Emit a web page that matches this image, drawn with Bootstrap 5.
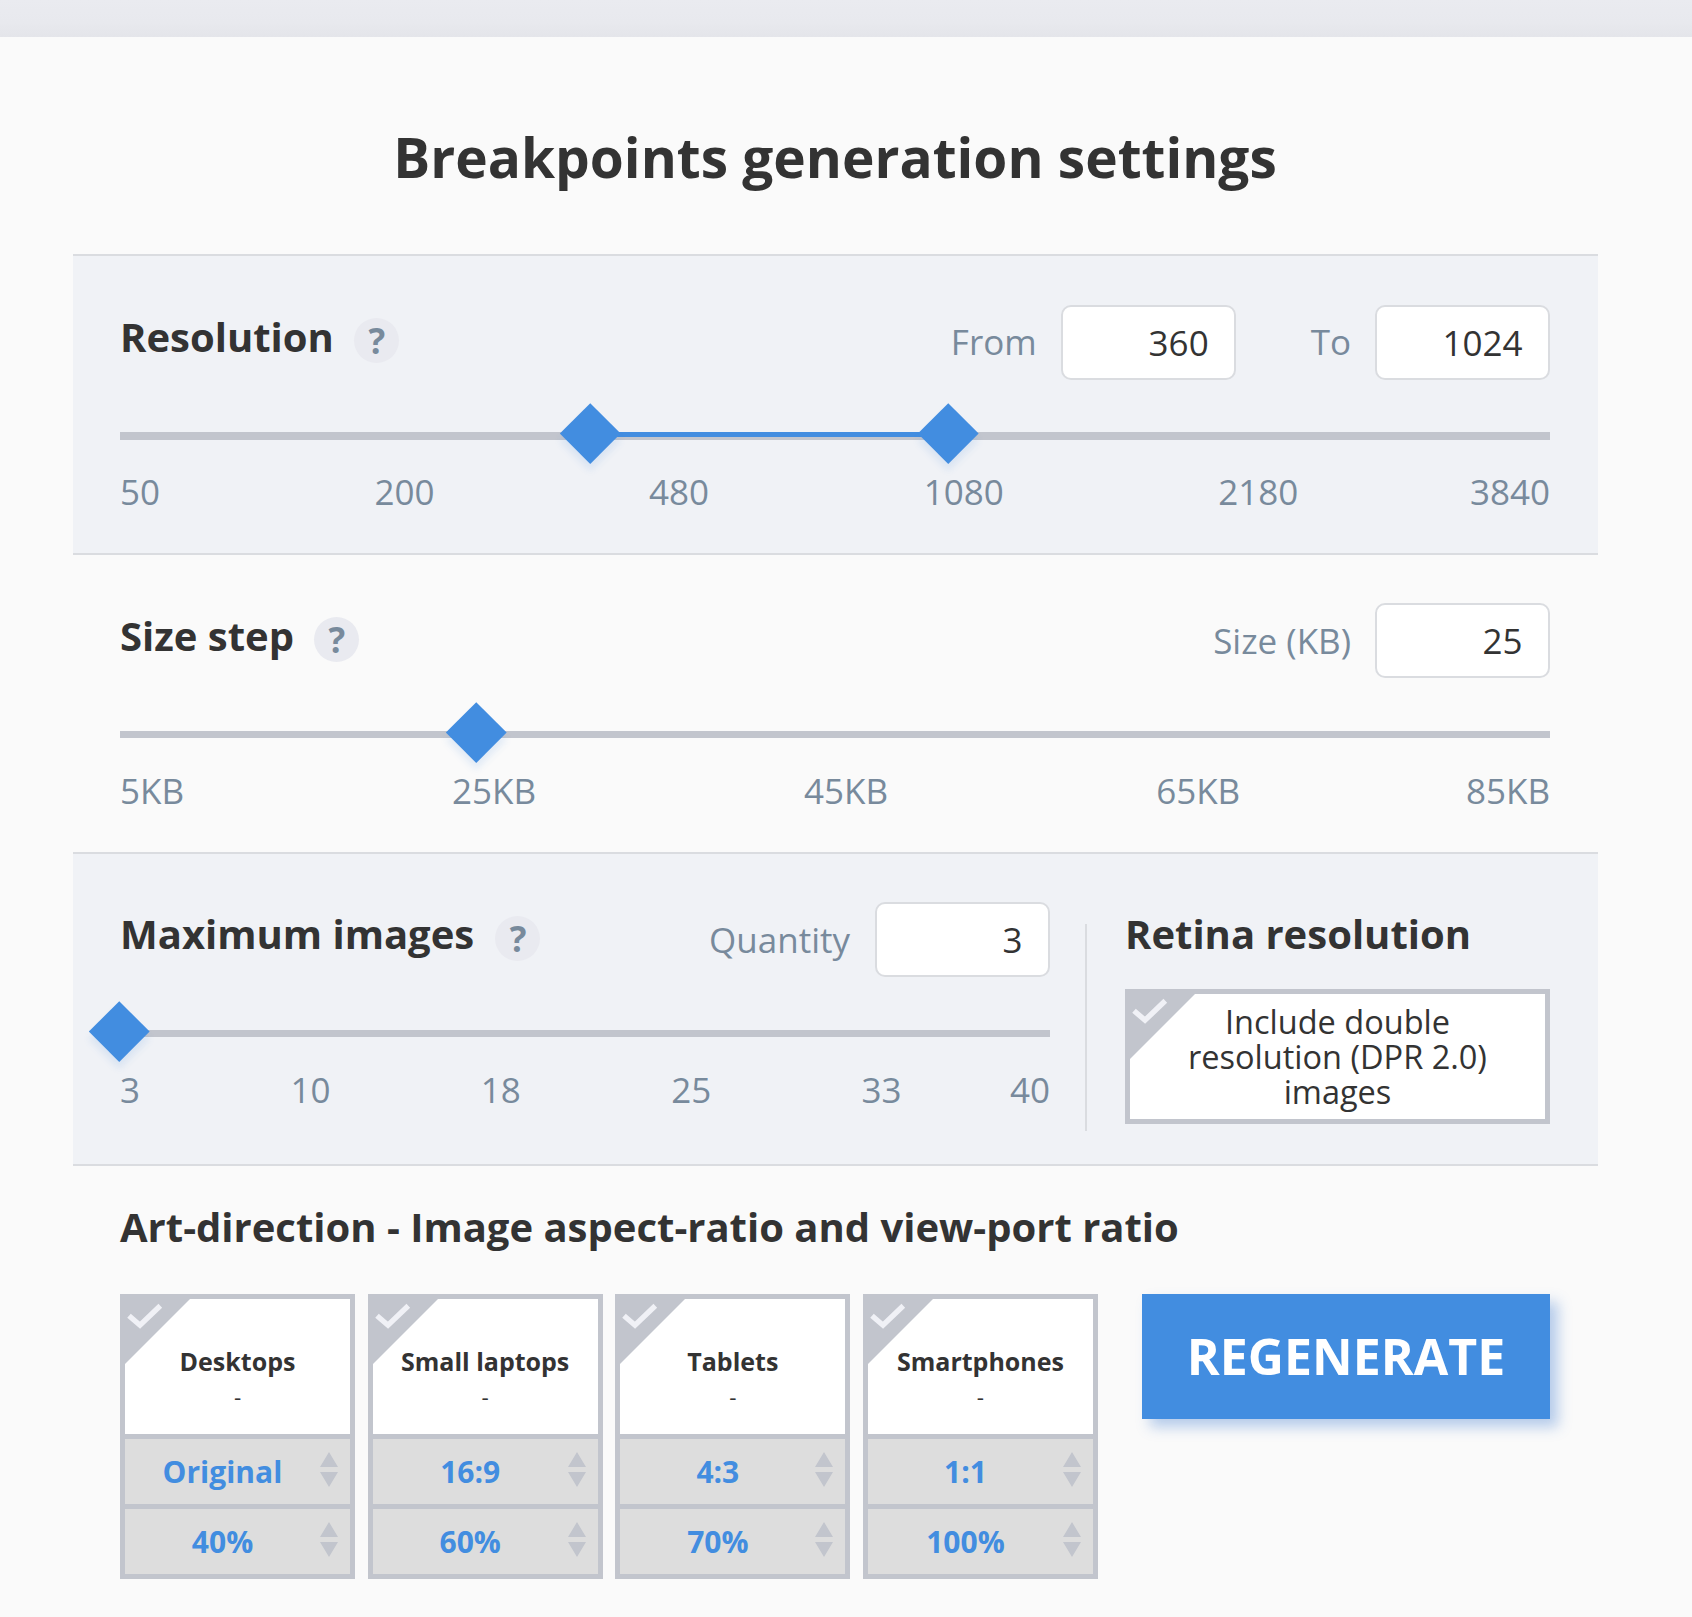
<!DOCTYPE html>
<html lang="en">
<head>
<meta charset="utf-8">
<meta name="viewport" content="width=device-width, initial-scale=1">
<title>Breakpoints generation settings</title>
<link href="https://cdn.jsdelivr.net/npm/bootstrap@5.3.0/dist/css/bootstrap.min.css" rel="stylesheet">
<style>
  :root { --ink: #333; --slate: #788a9c; --accent: #428de0; --steel: #c2c5cd; --line: #dadce0; --panel: #f0f2f6; }
  body { background: #fafafa; color: var(--ink); font-family: "Open Sans", sans-serif; overflow-x: hidden; }
  .top-strip { height: 37px; background: linear-gradient(#eaebf0, #e8e9ee 60%, #e4e5ea); }
  .settings { width: 1525px; margin-left: 73px; padding-top: 82px; }
  .page-title { font-size: 55px; line-height: 75px; font-weight: 700; margin-bottom: 60px; padding-right: 1px; }
  .band { padding: 48px 48px 38px 47px; }
  .band-tint { background: var(--panel); border-top: 2px solid var(--line); border-bottom: 2px solid var(--line); }
  .band-first { padding-top: 49px; }
  .band-first .head-row { margin-bottom: 52px; }
  .band-first .field-label { margin-top: -1px; }
  .band-last { padding-bottom: 33px; }
  .head-row { height: 75px; margin-bottom: 53px; }
  .band-title { font-size: 40px; line-height: 45px; font-weight: 700; margin: 0; }
  .head-row .band-title { margin-top: 9px; }
  .band-middle .band-title { margin-top: 10px; }
  .help { width: 45px; height: 45px; line-height: 45px; font-size: 35px; font-weight: 700; background: #e9eaf0; color: var(--slate); margin: 14px 0 0 20px; padding-left: 1px; }
  .band-first .help { margin-top: 13px; }
  .band-last .help { margin-left: 21px; }
  .field-label { font-size: 35px; line-height: 75px; color: var(--slate); margin-right: 24px; }
  .band-last .field-label { margin-right: 25px; }
  .field-box.form-control { width: 175px; height: 75px; border: 2px solid var(--line); border-radius: 10px; padding: 0 25.5px; font-size: 35px; line-height: 71px; color: var(--ink); text-align: right; background: #fff; }
  #from.field-box { padding-right: 25px; }
  .field-gap { margin-left: 75px; }
  .track { height: 7px; margin-bottom: 29px; background: var(--steel); }
  .band-first .track { height: 8px; margin-bottom: 28px; }
  .track-fill { position: absolute; top: 0; height: 5px; background: var(--accent); }
  .handle { position: absolute; top: 1.5px; width: 42.5px; height: 42.5px; margin: -21.25px 0 0 -21.25px; transform: rotate(45deg); background: var(--accent); box-shadow: 5px 5px 7px rgba(66, 141, 224, .13); }
  .ticks { font-size: 35px; line-height: 47px; color: var(--slate); }
  .ticks span { margin-right: var(--step); }
  .ticks span:nth-last-child(2) { margin-right: 0; }
  .ticks span:last-child { margin: 0 0 0 auto; }
  .col-left { width: 930px; }
  .rule { width: 2px; height: 207px; background: var(--line); margin: 22px 38px 0 35px; }
  .col-right { width: 425px; padding-top: 9px; }
  .option { border: 5px solid var(--steel); background: #fff; }
  .option-wide { height: 135px; margin-top: 33px; font-size: 32.5px; line-height: 35px; padding: 10px 55px 0; }
  .corner { position: absolute; left: 0; top: 0; width: 66px; height: 66px; }
  .art { padding: 38px 48px 0 47px; }
  .art-row { margin-top: 45px; }
  .devices { width: 978px; }
  .device { width: 235px; border: 5px solid var(--steel); background: #ddd; }
  .device-face { height: 135px; background: #fff; padding-top: 45px; }
  .device-name { font-size: 25px; line-height: 35px; font-weight: 700; }
  .device-dash { font-size: 22.5px; line-height: 35px; }
  .picker { height: 70px; border-top: 5px solid var(--steel); padding-right: 12px; }
  .picker-value { font-size: 30px; line-height: 65px; font-weight: 700; color: var(--accent); }
  .arrows { width: 18px; height: 35px; margin-top: 13px; }
  .regen.btn { width: 408px; height: 125px; border: 0; border-radius: 0; margin-left: 44px; padding: 0; background: var(--accent); color: #fff; font-size: 50px; line-height: 125px; font-weight: 700; box-shadow: 7.5px 7.5px 12.5px rgba(66, 125, 210, .37); }
</style>
<script src="https://cdn.jsdelivr.net/npm/bootstrap@5.3.0/dist/js/bootstrap.bundle.min.js"></script>
</head>
<body>
<svg width="0" height="0" class="position-absolute" aria-hidden="true">
  <symbol id="tick-corner" viewBox="0 0 66 66">
    <path d="M0 0H65L0 65Z" fill="#c2c5cd"/>
    <path d="M4 16.7L15 26.2L35.3 6.8" fill="none" stroke="#f0f1f6" stroke-width="5.4"/>
  </symbol>
  <symbol id="up-down" viewBox="0 0 18 35">
    <path d="M9 0L18 15H0ZM0 20H18L9 35Z" fill="#c2c5cd"/>
  </symbol>
</svg>
<div class="top-strip"></div>
<main class="settings">
  <h1 class="page-title text-center">Breakpoints generation settings</h1>

  <section class="band band-tint band-first">
    <div class="head-row d-flex align-items-start">
      <h2 class="band-title">Resolution</h2>
      <span class="help rounded-circle text-center">?</span>
      <label class="field-label ms-auto" for="from">From</label>
      <input class="field-box form-control" id="from" value="360">
      <label class="field-label field-gap" for="to">To</label>
      <input class="field-box form-control" id="to" value="1024">
    </div>
    <div class="track position-relative">
      <div class="track-fill" style="left:32.9%;width:25.03%"></div>
      <div class="handle" style="left:32.9%"></div>
      <div class="handle" style="left:57.93%"></div>
    </div>
    <div class="ticks d-flex" style="--step:15%"><span>50</span><span>200</span><span>480</span><span>1080</span><span>2180</span><span>3840</span></div>
  </section>

  <section class="band band-middle">
    <div class="head-row d-flex align-items-start">
      <h2 class="band-title">Size step</h2>
      <span class="help rounded-circle text-center">?</span>
      <label class="field-label ms-auto" for="size">Size (KB)</label>
      <input class="field-box form-control" id="size" value="25">
    </div>
    <div class="track position-relative">
      <div class="handle" style="left:24.93%"></div>
    </div>
    <div class="ticks d-flex" style="--step:18.74%"><span>5KB</span><span>25KB</span><span>45KB</span><span>65KB</span><span>85KB</span></div>
  </section>

  <section class="band band-tint band-last d-flex align-items-start">
    <div class="col-left">
      <div class="head-row d-flex align-items-start">
        <h2 class="band-title">Maximum images</h2>
        <span class="help rounded-circle text-center">?</span>
        <label class="field-label ms-auto" for="qty">Quantity</label>
        <input class="field-box form-control" id="qty" value="3">
      </div>
      <div class="track position-relative">
        <div class="handle" style="left:-.06%"></div>
      </div>
      <div class="ticks d-flex" style="--step:16.17%"><span>3</span><span>10</span><span>18</span><span>25</span><span>33</span><span>40</span></div>
    </div>
    <div class="rule"></div>
    <div class="col-right">
      <h2 class="band-title">Retina resolution</h2>
      <div class="option option-wide position-relative text-center">
        <svg class="corner"><use href="#tick-corner"/></svg>
        Include double resolution (DPR 2.0) images
      </div>
    </div>
  </section>

  <section class="art">
    <h2 class="band-title">Art-direction - Image aspect-ratio and view-port ratio</h2>
    <div class="art-row d-flex align-items-start">
      <div class="devices d-flex justify-content-between text-center">
        <div class="device position-relative">
          <svg class="corner"><use href="#tick-corner"/></svg>
          <div class="device-face"><div class="device-name">Desktops</div><div class="device-dash">-</div></div>
          <div class="picker d-flex"><span class="picker-value flex-grow-1">Original</span><svg class="arrows"><use href="#up-down"/></svg></div>
          <div class="picker d-flex"><span class="picker-value flex-grow-1">40%</span><svg class="arrows"><use href="#up-down"/></svg></div>
        </div>
        <div class="device position-relative">
          <svg class="corner"><use href="#tick-corner"/></svg>
          <div class="device-face"><div class="device-name">Small laptops</div><div class="device-dash">-</div></div>
          <div class="picker d-flex"><span class="picker-value flex-grow-1">16:9</span><svg class="arrows"><use href="#up-down"/></svg></div>
          <div class="picker d-flex"><span class="picker-value flex-grow-1">60%</span><svg class="arrows"><use href="#up-down"/></svg></div>
        </div>
        <div class="device position-relative">
          <svg class="corner"><use href="#tick-corner"/></svg>
          <div class="device-face"><div class="device-name">Tablets</div><div class="device-dash">-</div></div>
          <div class="picker d-flex"><span class="picker-value flex-grow-1">4:3</span><svg class="arrows"><use href="#up-down"/></svg></div>
          <div class="picker d-flex"><span class="picker-value flex-grow-1">70%</span><svg class="arrows"><use href="#up-down"/></svg></div>
        </div>
        <div class="device position-relative">
          <svg class="corner"><use href="#tick-corner"/></svg>
          <div class="device-face"><div class="device-name">Smartphones</div><div class="device-dash">-</div></div>
          <div class="picker d-flex"><span class="picker-value flex-grow-1">1:1</span><svg class="arrows"><use href="#up-down"/></svg></div>
          <div class="picker d-flex"><span class="picker-value flex-grow-1">100%</span><svg class="arrows"><use href="#up-down"/></svg></div>
        </div>
      </div>
      <button type="button" class="regen btn">REGENERATE</button>
    </div>
  </section>
</main>
</body>
</html>
